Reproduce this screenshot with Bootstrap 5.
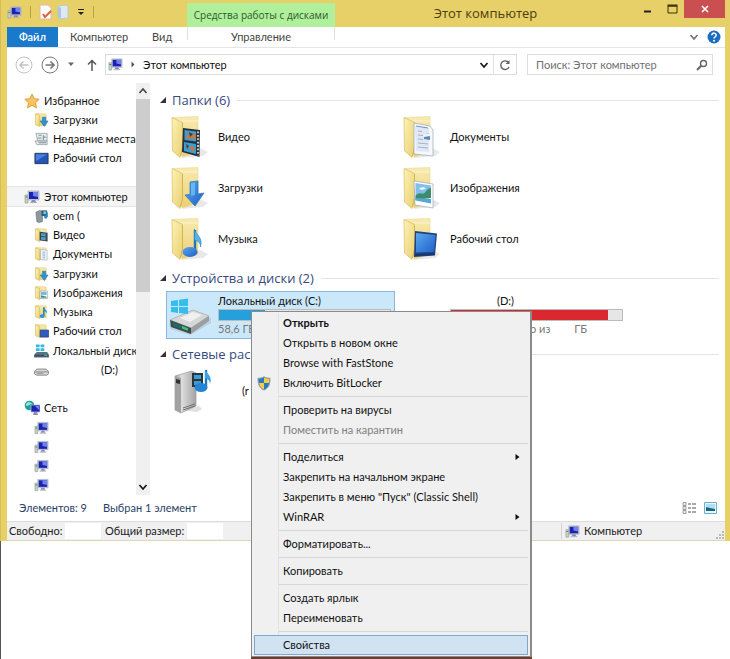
<!DOCTYPE html>
<html lang="ru">
<head>
<meta charset="utf-8">
<meta name="viewport" content="width=device-width, initial-scale=1">
<title>Этот компьютер</title>
<link href="https://cdn.jsdelivr.net/npm/bootstrap@5.3.0/dist/css/bootstrap.min.css" rel="stylesheet">
<style>
body{font-family:Lato,"Open Sans",sans-serif;font-size:11px;line-height:16px;color:#111;background:#fff;overflow-x:hidden}
button,input{font:inherit;color:inherit}
button{background:none;border:0;padding:0}
a{color:inherit;text-decoration:none}
svg{flex:none;display:block}
.page-wrap{border-left:1px solid #555;min-height:100vh}
.win{background:#e8d068;padding:0 5px 0 6px;margin-left:-1px;border-left:1px solid #d8bd50}
.titlebar{height:27px}
.qat{width:180px;padding-bottom:3px}
.vsep{width:1px;height:12px;background:#b9a040}
.ctx-tab{background:#b0f09c;color:#2c5a26;width:148px;margin-top:3px;white-space:nowrap;font-family:"Open Sans",sans-serif;font-size:10px}
.win-title{font-family:"Open Sans",sans-serif;font-size:13px;color:#4a3d10;line-height:26px}
.capbtn{width:24px;height:17px}
.capclose{width:41px;height:18px;background:#c94f50}
.ribbon{height:21px;border-bottom:1px solid #e3e3e8;color:#444}
.ribbon button{text-align:center}
.tabs{width:180px}
.tabs .tab{padding:0 12px}
.file-tab{width:51px;height:20px;background:#1979ca;color:#fff;font-weight:600}
.ctx-sub{width:148px;background:linear-gradient(#e0e0e0,#e0e0e0) 0 0/1px 13px no-repeat,linear-gradient(#e0e0e0,#e0e0e0) 100% 0/1px 13px no-repeat}
.navrow{height:33px;padding:0 12px 0 8px}
.field{border:1px solid #dcdcdc;height:21px}
.addr{margin-left:8px;padding-left:2px}
.refresh{width:23px}
.up{margin-left:12px}
.search{width:186px;margin-left:10px}
.search input{border:0;outline:0;background:none;min-width:0;color:#666}
.search input::placeholder{color:#707070;opacity:1}
.side{width:129px;height:404px;margin-top:10px;overflow:hidden}
.side>*{flex:1 1 0;min-height:0;white-space:nowrap}
.side a{display:flex;align-items:center;gap:4px;padding-left:27px}
.side a.root{padding-left:17px}
.side a.cur{background:#f5f5f5;outline:1px solid #e4e4e4}
.sbar{width:14px;background:#f0f0f0;margin-top:2px}
.sthumb{height:193px;background:#cdcdcd}
.pane{padding:7px 6px 0 10px}
.grp{height:24px;margin-top:3px;font-family:"Open Sans",sans-serif;font-size:13px;font-weight:400;line-height:24px;color:#384a80;margin-bottom:1px;white-space:nowrap}
.grp:first-child{margin-top:0}
.grp::after{content:"";flex:1;height:1px;background:#e2e4e8;margin-left:7px}
.grp svg{margin-right:6px}
.tiles{display:grid;grid-template-columns:repeat(auto-fill,232px);row-gap:3px;margin-left:6px}
.tile{height:48px;display:flex;align-items:center;padding-left:4px;gap:8px;white-space:nowrap}
.tile.wide{padding-left:0;gap:6px}
.tile.sel{background:#cbe8fb;box-shadow:inset 0 0 0 1px #8cb8dc;width:229px}
.tile .progress{width:173px;height:12px;border-radius:0;background:#e6e6e6;border:1px solid #bcbcbc}
.tile small{font-size:11px;color:#777}
.bar-c{background:#26a0da}.bar-d{background:#da2830}
.dname{padding-left:47px}
.dfree{padding-left:80px}
.info{height:26px;padding:0 8px 0 12px;color:#2b3f66}
.stat{height:20px;background:#f0f0f0;border-top:1px solid #dcdcdc;border-bottom:1px solid #ddd6b8;color:#222;white-space:nowrap}
.blank{background:#fff;height:16px;width:36px}
.lblfree{width:58px;padding-left:2px}.lbltotal{width:82px}
.pcpart{width:164px;border-left:1px solid #d4d4d4;padding-left:3px}
.ctxmenu{position:absolute;left:250px;top:311px;width:281px;background:#f0f0f0;border:1px solid #8a8a8a;border-width:1px 2px 1px 1px;padding:1px 2px;box-shadow:0 2px 0 #6b3c33}
.ctxmenu button{display:flex;align-items:center;width:100%;height:20px;text-align:left;padding-right:8px}
.ctxmenu .ico{width:25px;height:20px;border-right:1px solid #e2e2e2;margin-right:4px;padding-left:3px;flex:none}
.ctxmenu hr{margin:0 0 0 24px;height:7px;border:0;opacity:1;background:linear-gradient(#d7d7d7,#d7d7d7) 0 3px/100% 1px no-repeat;border-left:1px solid #e2e2e2}
.ctxmenu .act{background:#d1e2f2;box-shadow:inset 0 0 0 1px #7fa8d0}
.ctxmenu .act .ico{border-color:transparent}
.ctxmenu button:disabled{color:#808080}
</style>
<script src="https://cdn.jsdelivr.net/npm/bootstrap@5.3.0/dist/js/bootstrap.bundle.min.js"></script>
</head>
<body>
<svg width="0" height="0" class="position-absolute" aria-hidden="true">
<defs>
<linearGradient id="gf" x1="0" x2="1" y1="0" y2="1"><stop stop-color="#fdf3b4"/><stop offset="1" stop-color="#e9cf72"/></linearGradient>
<linearGradient id="gb" x1="0" x2="0" y1="0" y2="1"><stop stop-color="#f8eab0"/><stop offset="1" stop-color="#eccf70"/></linearGradient>
<linearGradient id="gs" x1="0" x2="1" y1="0" y2="1"><stop stop-color="#5aa8f0"/><stop offset="1" stop-color="#1f5fc8"/></linearGradient>
<linearGradient id="gm" x1="0" x2="1"><stop stop-color="#a9a9a9"/><stop offset=".3" stop-color="#dedede"/><stop offset="1" stop-color="#a4a4a4"/></linearGradient>
<symbol id="pc" viewBox="0 0 16 16"><path d="M1 6h3v8H1z" fill="#c9cfc4" stroke="#8a9a85" stroke-width=".6"/><path d="M1.5 8h2" stroke="#3a8a4a"/><path d="M4 2h11v9H4z" fill="#c6cbe0" stroke="#9aa0bb" stroke-width=".6"/><path d="M5 3h9v7H5z" fill="#1b22b0"/><path d="M9 3h5v5l-5-1z" fill="#6f83e6"/><path d="M8 11h3l1 2H7z" fill="#8890a8"/><path d="M6 13h7v1H6z" fill="#a8aec2"/></symbol>
<symbol id="fs" viewBox="0 0 16 16"><path d="M2 1l11 .5V14H6z" fill="url(#gb)" stroke="#dcc46a" stroke-width=".5"/><path d="M1.500 1.500L6 3v12l-4.500-2z" fill="url(#gf)" stroke="#d2b45a" stroke-width=".6"/></symbol>
<symbol id="fs-dl" viewBox="0 0 16 16"><use href="#fs"/><path d="M9 5h3.500v4H15l-4 6-4.500-6H9z" fill="#2e93d6" stroke="#1868a8" stroke-width=".5"/></symbol>
<symbol id="fs-vid" viewBox="0 0 16 16"><use href="#fs"/><path d="M6 4.500l8.500 1V15L6 13.500z" fill="#384450"/><path d="M7.500 6l5 .5v3l-5-.5zM7.500 10l5 .5v3l-5-.5z" fill="#4e9cc8"/></symbol>
<symbol id="fs-doc" viewBox="0 0 16 16"><use href="#fs"/><path d="M7 3l7 1v10.500L7 14z" fill="#f4f7fb" stroke="#8fa2b4" stroke-width=".6"/><path d="M9 6h3M9 8h3M9 10h3M9 12h3" stroke="#7b96b8" stroke-width=".8"/></symbol>
<symbol id="fs-img" viewBox="0 0 16 16"><use href="#fs"/><path d="M6.500 6h8v8h-8z" fill="#fff" stroke="#8a9aa8" stroke-width=".6"/><path d="M7.500 7h6v3h-6z" fill="#6cb8e4"/><path d="M7.500 10.500l6 1.500v1h-6z" fill="#3f8f78"/></symbol>
<symbol id="fs-mus" viewBox="0 0 16 16"><use href="#fs"/><path d="M10.500 3v9" stroke="#1b79bf" stroke-width="1.600"/><path d="M10.500 3c1 3 4 3 3.500 7-.5-2-2-2.500-3.500-3z" fill="#2c94dc"/><ellipse cx="8.700" cy="12.300" rx="2.600" ry="2" fill="#2c94dc"/></symbol>
<symbol id="fs-desk" viewBox="0 0 16 16"><use href="#fs"/><path d="M6.500 7h9v7.500h-9z" fill="#2b5cc4" stroke="#253b68" stroke-width=".7"/></symbol>
<symbol id="fl" viewBox="0 0 40 48"><path d="M11 45l22-2 5-4-8-4z" fill="#ccc" opacity=".45"/><path d="M2.500 4.500L28 3.500V39l-16 5z" fill="url(#gb)" stroke="#e8d68e" stroke-width=".6"/><path d="M10 8h18" stroke="#fffbe0" opacity=".7"/><path d="M2 4.500L12.500 9.500v25L10 44.500 2.500 38z" fill="url(#gf)" stroke="#d8bd62" stroke-width=".7"/><path d="M12.500 10v24L10.500 43" fill="none" stroke="#c9a94c" stroke-width=".9" opacity=".7"/></symbol>
<symbol id="fl-vid" viewBox="0 0 40 48"><use href="#fl"/><path d="M13 15l17 2-.5 27L12 39z" fill="#27333c"/><path d="M14.500 17l11.500 1.500v10l-11.500-1.500zM14 29l12 2v10L14 38z" fill="#3f9cd0"/><path d="M15 25l4-4 3 1 4-1v5l-11-1zM19 35l3-2 3 3-2 3z" fill="#c9783c"/><path d="M19 19l4 2-3 3zM16 31l3 2-2 3z" fill="#4a3c30"/><path d="M28 18.500v24" stroke="#e4edf2" stroke-width="1.600" stroke-dasharray="1.800 1.600"/></symbol>
<symbol id="fl-dl" viewBox="0 0 40 48"><use href="#fl"/><path d="M20 18l8-1v13l6-1-9 13-10-11 5-.5z" fill="url(#gs)" stroke="#2a7fc0" stroke-width=".8"/><path d="M21 19l4-.5V31l-4 1z" fill="#6cc0f4" opacity=".8"/></symbol>
<symbol id="fl-mus" viewBox="0 0 40 48"><use href="#fl"/><path d="M25 15v22" stroke="#1c78be" stroke-width="2.400"/><path d="M24.500 14c1 6 9 8 6 18 0-5-3-6-6-7z" fill="#55b4ee" stroke="#2482c4" stroke-width=".6"/><ellipse cx="20" cy="37" rx="7.500" ry="5" fill="url(#gs)"/></symbol>
<symbol id="fl-doc" viewBox="0 0 40 48"><use href="#fl"/><path d="M12 10l16 3 3 4v26l-19-2z" fill="#f5f8fc" stroke="#9aa9b8" stroke-width=".7"/><path d="M13 13l14 2v24l-13-1z" fill="#dfe8f4"/><path d="M14 13l12 2" stroke="#6f93bd"/><path d="M16 18l4 .5M16 22l5 .5M16 26l5 .5M16 30l10 1M16 34l10 1" stroke="#a3b3ca"/><path d="M22 20l6 1v6l-6-1z" fill="#5d8ab4"/><path d="M22 20l6 1v2l-6 1z" fill="#eef4fa"/></symbol>
<symbol id="fl-img" viewBox="0 0 40 48"><use href="#fl"/><path d="M12 17l19 3v24l-18-3z" fill="#fff" stroke="#9aa9b8" stroke-width=".7"/><path d="M13.500 19l15.500 2.500v12L13.500 33z" fill="#82bfec"/><path d="M13.500 32c4-5 7-1 9-3s3-5 6.500-5v10l-15.500 2z" fill="#3d8d6c"/><path d="M13.500 34l15.500 1v4.500l-15.500-3z" fill="#5aa6d4"/><path d="M17 24l5-1 2 2-5 1z" fill="#eef7fd"/></symbol>
<symbol id="fl-desk" viewBox="0 0 40 48"><use href="#fl"/><path d="M13 16l22 2.500-2 22-21 1.500z" fill="#22437e"/><path d="M14 18l19.500 2-1.500 17-18 .5z" fill="url(#gs)"/><path d="M13 39l19-1v2l-19 1z" fill="#17376a"/></symbol>
<symbol id="drv" viewBox="0 0 46 48"><path d="M3 33l24-12 18 6v5L24 44 4 38z" fill="#aab" opacity=".4"/><path d="M4 29L27 19l16 6-18 12z" fill="#d6d8d8" stroke="#a5a5a5" stroke-width=".7"/><path d="M4 29l21 8v6L5 36z" fill="#3c4a4a"/><path d="M6 31l16 6v3L7 35z" fill="#1f6a66"/><path d="M16 35l6 2.200v2.500L16 37.500z" fill="#3fc870"/><path d="M25 37l18-12v5L25 43z" fill="#9c9fa1"/><path d="M14 27l13-6 9 3-12 7z" fill="#f0f0f0"/><path d="M5 10l7-1v6H5zM13 8.700l9-1.200V15h-9zM5 16h7v6l-7-1zM13 16h9v7l-9-1z" fill="#35bdec"/></symbol>
<symbol id="net" viewBox="0 0 46 48"><path d="M15 43l16 2 5-3-3-3z" fill="#ccc" opacity=".6"/><path d="M9 9l17-5 4 2v33L15 46l-6-3z" fill="url(#gm)" stroke="#999" stroke-width=".7"/><path d="M9 9l6 2v35l-6-3z" fill="#a2a2a2"/><path d="M10 12l4 1v4l-4-1z" fill="#333"/><path d="M17 41l12-4M17 43l12-4" stroke="#707070"/><path d="M26 6h11v14H26z" fill="#283642"/><path d="M28 8h7v4h-7zM28 14h7v4h-7z" fill="#3f9ad0"/><path d="M40 3v17" stroke="#1c78be" stroke-width="2.400"/><path d="M39 2c1 5 8 6 5 15 0-4-3-5-5-6z" fill="#3ba2e4"/><ellipse cx="35" cy="20.500" rx="6.500" ry="4.500" fill="#2585d4"/></symbol>
<symbol id="tri" viewBox="0 0 6 6"><path d="M6 0v6H0z" fill="#333"/></symbol>
<symbol id="cd" viewBox="0 0 10 8"><path d="M1.500 2L5 6l3.500-4" fill="none" stroke="currentColor" stroke-width="1.600"/></symbol>
</defs>
</svg>
<div class="page-wrap position-relative">
<div class="win">
  <header class="titlebar d-flex">
    <div class="qat d-flex align-items-center">
      <svg width="15" height="15"><use href="#pc"/></svg>
      <span class="vsep ms-2 me-1"></span>
      <button aria-label="Свойства папки" class="ms-1"><svg width="14" height="16" viewBox="0 0 14 16"><path d="M1 1h8l3 3v11H1z" fill="#fff" stroke="#e4b8a4"/><path d="M4 10l2 3 6-6" fill="none" stroke="#e0603c" stroke-width="2"/></svg></button>
      <button aria-label="Новая папка" class="ms-1"><svg width="12" height="16" viewBox="0 0 12 16"><path d="M1 2l8-1 2 2v11l-8 1-2-2z" fill="#dfe8ee" stroke="#b7c8d4"/><path d="M1 2l3 2v11l-3-2z" fill="#a9c8e4"/></svg></button>
      <button aria-label="Настройка панели" class="ms-2"><svg width="8" height="8" viewBox="0 0 8 8"><path d="M1 1.500h6" stroke="#222"/><path d="M1 4h6L4 7z" fill="#222"/></svg></button>
      <span class="vsep ms-2"></span>
    </div>
    <div class="ctx-tab d-flex align-items-center justify-content-center">Средства работы с дисками</div>
    <div class="win-title flex-grow-1 text-center">Этот компьютер</div>
    <button class="capbtn" aria-label="Свернуть"><svg class="mx-auto" width="10" height="10" viewBox="0 0 10 10"><path d="M1 7.500h7" stroke="#222" stroke-width="2"/></svg></button>
    <button class="capbtn" aria-label="Развернуть"><svg class="mx-auto" width="11" height="10" viewBox="0 0 11 10"><path d="M1 2h9v7H1z" fill="none" stroke="#3b3010"/><path d="M.5 1.500h10" stroke="#3b3010" stroke-width="2"/></svg></button>
    <button class="capclose" aria-label="Закрыть"><svg class="mx-auto" width="8" height="8" viewBox="0 0 8 8"><path d="M1 1l6 6M7 1L1 7" stroke="#fff" stroke-width="1.600"/></svg></button>
  </header>
  <div class="bg-white">
    <nav class="ribbon d-flex" aria-label="Лента">
      <div class="tabs d-flex"><button class="file-tab">Файл</button>
      <button class="tab">Компьютер</button>
      <button class="tab">Вид</button></div>
      <button class="ctx-sub">Управление</button>
      <button class="ms-auto me-2 text-secondary" aria-label="Развернуть ленту"><svg width="10" height="8"><use href="#cd"/></svg></button>
      <button class="me-1" aria-label="Справка"><svg width="14" height="14" viewBox="0 0 14 14"><circle cx="7" cy="7" r="6.500" fill="#1a6fc0"/><path d="M4.800 5.300c0-3 4.600-2.800 4.400 0C9.100 6.900 7 6.700 7 8.600" fill="none" stroke="#fff" stroke-width="1.500"/><circle cx="7" cy="10.700" r="1" fill="#fff"/></svg></button>
    </nav>
    <div class="navrow d-flex align-items-center">
      <button aria-label="Назад"><svg width="18" height="18" viewBox="0 0 18 18" fill="none" stroke="#c6c2c4"><circle cx="9" cy="9" r="8"/><path d="M13.500 9H5M8.500 5.500L5 9l3.500 3.500" stroke-width="1.500"/></svg></button>
      <button aria-label="Вперёд" class="ms-2"><svg width="18" height="18" viewBox="0 0 18 18" fill="none" stroke="#777"><circle cx="9" cy="9" r="8"/><path d="M4.500 9H13M9.500 5.500L13 9l-3.500 3.500" stroke-width="1.700"/></svg></button>
      <button aria-label="Последние" class="ms-2"><svg width="8" height="5" viewBox="0 0 8 5"><path d="M1 .5h6L4 4z" fill="#666"/></svg></button>
      <button aria-label="Вверх" class="up"><svg width="10" height="12" viewBox="0 0 10 12"><path d="M5 12V2M1 5.500L5 1.500l4 4" fill="none" stroke="#555" stroke-width="1.500"/></svg></button>
      <div class="field addr d-flex align-items-center flex-grow-1">
        <svg width="15" height="15"><use href="#pc"/></svg>
        <svg class="ms-2" width="4" height="7" viewBox="0 0 4 7"><path d="M.5.5v6l3-3z" fill="#555"/></svg>
        <a href="#" class="ms-2 me-auto">Этот компьютер</a>
        <button class="me-1" aria-label="Журнал адресов"><svg width="10" height="8"><use href="#cd"/></svg></button>
        <button class="refresh border-start h-100" aria-label="Обновить"><svg class="mx-auto" width="12" height="12" viewBox="0 0 12 12"><path d="M9.800 4A4.300 4.300 0 1 0 10 8" fill="none" stroke="#666" stroke-width="1.400"/><path d="M10.500 1v4h-4z" fill="#666"/></svg></button>
      </div>
      <div class="field search d-flex align-items-center ps-2 pe-1">
        <input class="flex-grow-1 p-0" type="text" aria-label="Поиск" placeholder="Поиск: Этот компьютер">
        <svg width="12" height="12" viewBox="0 0 12 12" fill="none" stroke="#666"><circle cx="7.500" cy="4.500" r="3" stroke-width="1.400"/><path d="M5.200 6.800L1 11" stroke-width="2"/></svg>
      </div>
    </div>
    <div class="d-flex">
      <nav class="side d-flex flex-column" aria-label="Области">
        <a href="#" class="root"><svg width="16" height="16" viewBox="0 0 16 16"><path d="M8 1l2.200 4.700 5 .6-3.700 3.500 1 5L8 12.300 3.500 14.800l1-5L.8 6.300l5-.6z" fill="#f8c460" stroke="#e09430" stroke-width=".9"/></svg>Избранное</a>
        <a href="#"><svg width="15" height="16"><use href="#fs-dl"/></svg>Загрузки</a>
        <a href="#"><svg width="15" height="16" viewBox="0 0 16 16"><path d="M2 2h12v8H4zM1 10h13v4H3z" fill="#e4e9ec" stroke="#8f9da6" stroke-width=".8"/><path d="M5 4h3M10 4v5M4 7h4M10 6h3M5 12h8" stroke="#7b8992"/></svg>Недавние места</a>
        <a href="#"><svg width="15" height="16" viewBox="0 0 16 16"><path d="M1 3h14v11H1z" fill="#2454b8" stroke="#22345c"/><path d="M2 4h12L3 11H2z" fill="#4a7fdc"/></svg>Рабочий стол</a>
        <div></div>
        <a href="#" class="root cur"><svg width="16" height="16"><use href="#pc"/></svg>Этот компьютер</a>
        <a href="#"><svg width="15" height="16" viewBox="0 0 16 16"><path d="M2 4l4-2 3 1v11l-4 1-2-1z" fill="#8d989e" stroke="#5d6a72" stroke-width=".6"/><path d="M8 2h6v6H8z" fill="#33586c"/><path d="M10 3h3v3h-3z" fill="#7cc3e0"/><path d="M14 4v5" stroke="#2c8cc8" stroke-width="1.500"/><circle cx="12.500" cy="9" r="1.800" fill="#2c8cc8"/></svg>oem (</a>
        <a href="#"><svg width="15" height="16"><use href="#fs-vid"/></svg>Видео</a>
        <a href="#"><svg width="15" height="16"><use href="#fs-doc"/></svg>Документы</a>
        <a href="#"><svg width="15" height="16"><use href="#fs-dl"/></svg>Загрузки</a>
        <a href="#"><svg width="15" height="16"><use href="#fs-img"/></svg>Изображения</a>
        <a href="#"><svg width="15" height="16"><use href="#fs-mus"/></svg>Музыка</a>
        <a href="#"><svg width="15" height="16"><use href="#fs-desk"/></svg>Рабочий стол</a>
        <a href="#"><svg width="15" height="16" viewBox="0 0 16 16"><path d="M2 1h4v3H2zM7 1h4v3H7zM2 5h4v3H2zM7 5h4v3H7z" fill="#35b6de"/><path d="M3 9h11l2 3v3H0v-3z" fill="#5a7486"/><path d="M1 12h14v2H1z" fill="#38505e"/><path d="M11 12h3v1h-3z" fill="#54d890"/></svg>Локальный диск</a>
        <a href="#"><svg width="15" height="16" viewBox="0 0 16 16"><path d="M3 7h10l2.500 2.500v2.500l-2 1.500H2.500L.5 12V9.500z" fill="#d9d9d9" stroke="#777" stroke-width=".9"/><path d="M1 10h14M3 11.500h7" stroke="#888"/></svg><span class="ps-5">(D:)</span></a>
        <div></div>
        <a href="#" class="root"><svg width="16" height="16" viewBox="0 0 16 16"><circle cx="5.500" cy="5.500" r="4.800" fill="#1b9e9c"/><path d="M2 4c2-3 5-2 6 0-2 0-3 2-6 2z" fill="#9be4d0"/><path d="M7 5h9v7H7z" fill="#1b22b0" stroke="#b0b7d4" stroke-width=".8"/><path d="M11 6h4v4z" fill="#6f83e6"/><path d="M10 12h3l1 3H9z" fill="#8890b8"/></svg>Сеть</a>
        <a href="#" aria-label="Компьютер сети 1"><svg width="15" height="16"><use href="#pc"/></svg></a>
        <a href="#" aria-label="Компьютер сети 2"><svg width="15" height="16"><use href="#pc"/></svg></a>
        <a href="#" aria-label="Компьютер сети 3"><svg width="15" height="16"><use href="#pc"/></svg></a>
        <a href="#" aria-label="Компьютер сети 4"><svg width="15" height="16"><use href="#pc"/></svg></a>
      </nav>
      <div class="sbar d-flex flex-column align-items-center">
        <svg class="my-1" width="10" height="8" viewBox="0 0 10 8"><path d="M1.500 6L5 2l3.500 4" fill="none" stroke="#444" stroke-width="1.600"/></svg>
        <div class="sthumb w-100"></div>
        <svg class="mt-auto mb-1" width="10" height="8"><use href="#cd"/></svg>
      </div>
      <main class="pane flex-grow-1">
        <h2 class="grp d-flex align-items-center"><svg width="6" height="6"><use href="#tri"/></svg>Папки (6)</h2>
        <div class="tiles">
          <a href="#" class="tile"><svg width="40" height="48"><use href="#fl-vid"/></svg>Видео</a>
          <a href="#" class="tile"><svg width="40" height="48"><use href="#fl-doc"/></svg>Документы</a>
          <a href="#" class="tile"><svg width="40" height="48"><use href="#fl-dl"/></svg>Загрузки</a>
          <a href="#" class="tile"><svg width="40" height="48"><use href="#fl-img"/></svg>Изображения</a>
          <a href="#" class="tile"><svg width="40" height="48"><use href="#fl-mus"/></svg>Музыка</a>
          <a href="#" class="tile"><svg width="40" height="48"><use href="#fl-desk"/></svg>Рабочий стол</a>
        </div>
        <h2 class="grp d-flex align-items-center"><svg width="6" height="6"><use href="#tri"/></svg>Устройства и диски (2)</h2>
        <div class="tiles">
          <a href="#" class="tile wide sel"><svg width="46" height="48"><use href="#drv"/></svg>
            <span><span class="d-block">Локальный диск (C:)</span><span class="progress" role="progressbar" aria-label="Занято на C" aria-valuenow="27" aria-valuemin="0" aria-valuemax="100"><span class="progress-bar bar-c" style="width:27%"></span></span><small class="d-block">58,6 ГБ</small></span></a>
          <a href="#" class="tile"><svg width="40" height="48" viewBox="0 0 40 48"></svg>
            <span><span class="d-block dname">(D:)</span><span class="progress" role="progressbar" aria-label="Занято на D" aria-valuenow="92" aria-valuemin="0" aria-valuemax="100"><span class="progress-bar bar-d" style="width:92%"></span></span><small class="d-flex dfree">о из<span class="ps-4">ГБ</span></small></span></a>
        </div>
        <h2 class="grp d-flex align-items-center"><svg width="6" height="6"><use href="#tri"/></svg>Сетевые рас</h2>
        <div class="tiles"><a href="#" class="tile wide"><svg width="46" height="48"><use href="#net"/></svg><span class="ps-4">(r</span></a></div>
      </main>
    </div>
    <div class="info d-flex align-items-center">
      <span class="me-3">Элементов: 9</span><span>Выбран 1 элемент</span>
      <button class="ms-auto me-2" aria-label="Таблица"><svg width="14" height="12" viewBox="0 0 14 12"><path d="M1 .5h3v3H1zM1 4.500h3v3H1zM1 8.500h3v3H1z" fill="#eee" stroke="#888" stroke-width=".8"/><path d="M6 2h3m1 0h4M6 6h3m1 0h4M6 10h3m1 0h4" stroke="#555"/></svg></button>
      <button aria-label="Крупные значки"><svg width="13" height="12" viewBox="0 0 13 12"><path d="M.5.5h12v11H.5z" fill="#e8f6fb" stroke="#68b4cc"/><path d="M2 2h9v5H2z" fill="#b4dff2"/><path d="M2 5l4 1 5 1v2H2z" fill="#17667c"/></svg></button>
    </div>
    <footer class="stat d-flex align-items-center">
      <span class="lblfree">Свободно:</span><span class="blank me-1"></span><span class="lbltotal">Общий размер:</span><span class="blank"></span>
      <div class="pcpart ms-auto d-flex align-items-center"><svg class="me-1" width="15" height="15"><use href="#pc"/></svg>Компьютер
        <svg class="ms-auto align-self-end" width="9" height="9" viewBox="0 0 9 9"><path d="M6 1h2v2H6zM3 4h2v2H3zM6 4h2v2H6zM0 7h2v2H0zM3 7h2v2H3zM6 7h2v2H6z" fill="#b8b8b8"/></svg></div>
    </footer>
  </div>
</div>
<div class="ctxmenu" role="menu">
  <button role="menuitem"><span class="ico"></span><b>Открыть</b></button>
  <button role="menuitem"><span class="ico"></span>Открыть в новом окне</button>
  <button role="menuitem"><span class="ico"></span>Browse with FastStone</button>
  <button role="menuitem"><span class="ico d-flex align-items-center"><svg width="14" height="15" viewBox="0 0 14 15"><path d="M7 .7c2 1.300 4 1.500 6 1.500 0 6-1 9.500-6 12C2 11.700 1 8.200 1 2.200c2 0 4-.2 6-1.500z" fill="#2c78c8" stroke="#9aa4ae"/><path d="M7 1.500c2 1 3.500 1.200 5.300 1.400L12 7H7zM7 7v6.500C4 12 2.500 10 2 7z" fill="#f4cf3e"/></svg></span>Включить BitLocker</button>
  <hr>
  <button role="menuitem"><span class="ico"></span>Проверить на вирусы</button>
  <button role="menuitem" disabled><span class="ico"></span>Поместить на карантин</button>
  <hr>
  <button role="menuitem"><span class="ico"></span>Поделиться<svg class="ms-auto" width="5" height="8" viewBox="0 0 5 8"><path d="M.5 1v6l4-3z" fill="#111"/></svg></button>
  <button role="menuitem"><span class="ico"></span>Закрепить на начальном экране</button>
  <button role="menuitem"><span class="ico"></span>Закрепить в меню "Пуск" (Classic Shell)</button>
  <button role="menuitem"><span class="ico"></span>WinRAR<svg class="ms-auto" width="5" height="8" viewBox="0 0 5 8"><path d="M.5 1v6l4-3z" fill="#111"/></svg></button>
  <hr>
  <button role="menuitem"><span class="ico"></span>Форматировать...</button>
  <hr>
  <button role="menuitem"><span class="ico"></span>Копировать</button>
  <hr>
  <button role="menuitem"><span class="ico"></span>Создать ярлык</button>
  <button role="menuitem"><span class="ico"></span>Переименовать</button>
  <hr>
  <button role="menuitem" class="act"><span class="ico"></span>Свойства</button>
</div>
</div>
</body>
</html>
